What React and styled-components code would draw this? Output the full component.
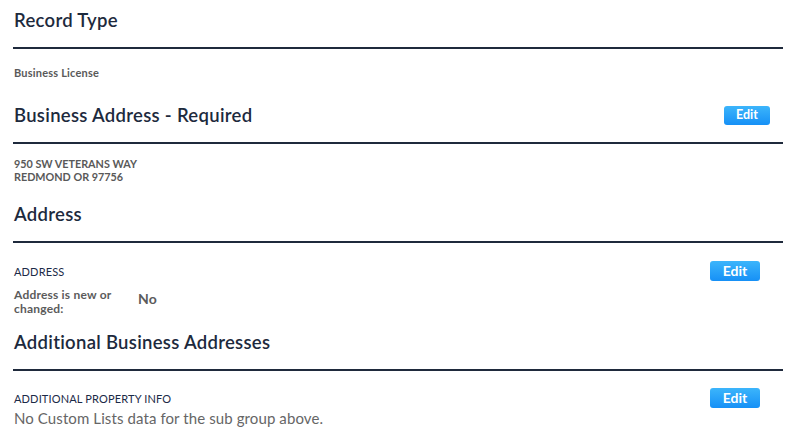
import React from "react";
import styled, { createGlobalStyle } from "styled-components";

const Global = createGlobalStyle`
  html, body { margin: 0; padding: 0; background: #ffffff; }
  body { font-family: Lato, "Open Sans", "Liberation Sans", sans-serif; }
`;

const Page = styled.div`
  width: 770px;
  margin-left: 13px;
  padding-top: 1px;
`;

const SectionHeader = styled.div`
  display: flex;
  align-items: center;
  justify-content: space-between;
  height: 38px;
  padding-bottom: 8px;
  padding-right: 13px;
  border-bottom: 2px solid #1f2a3c;
`;

const Heading = styled.h2`
  margin: 0 0 0 1px;
  font-size: 18.5px;
  font-weight: 600;
  color: #1d2a3d;
  line-height: 24px;
  letter-spacing: 0.3px;
`;

const Body = styled.div`
  padding: ${(p) => p.$pad};
  padding-left: 1px;
`;

const SmallText = styled.div`
  font-size: ${(p) => p.$size || "10px"};
  font-weight: 700;
  color: #595959;
  line-height: ${(p) => p.$lh || "14px"};
  letter-spacing: ${(p) => p.$ls || "0"};
`;

const Row = styled.div`
  display: flex;
  align-items: center;
  justify-content: space-between;
  height: 20px;
  padding-right: 23px;
`;

const GroupLabel = styled.div`
  font-size: 11px;
  color: #1b2a47;
  letter-spacing: 0.15px;
`;

const EditButton = styled.button`
  border: none;
  border-radius: 3px;
  background: linear-gradient(#3cb5fb, #1690f6);
  color: #ffffff;
  font-family: Lato, "Open Sans", sans-serif;
  font-weight: 700;
  font-size: ${(p) => (p.$small ? "12.5px" : "14px")};
  width: ${(p) => (p.$small ? "46px" : "50px")};
  height: ${(p) => (p.$small ? "19px" : "20px")};
  padding: 0;
  line-height: 1;
  cursor: pointer;
`;

const Field = styled.div`
  display: grid;
  grid-template-columns: 124px 1fr;
  margin-top: 7px;
`;

const FieldLabel = styled.div`
  max-width: 108px;
  font-size: 12px;
  font-weight: 700;
  color: #5b5b5b;
  line-height: 14px;
  letter-spacing: 0.2px;
`;

const FieldValue = styled.div`
  font-size: 14px;
  font-weight: 700;
  color: #5b5b5b;
  line-height: 14px;
  padding-top: 4px;
  letter-spacing: 0.3px;
`;

const Message = styled.div`
  font-size: 15px;
  color: #666666;
  line-height: 18px;
  margin-top: 1px;
  letter-spacing: 0.1px;
`;

export default function App() {
  return (
    <>
      <Global />
      <Page>
        <SectionHeader>
          <Heading>Record Type</Heading>
        </SectionHeader>
        <Body $pad="17px 0 16px">
          <SmallText $size="11px" $ls="0.2px">Business License</SmallText>
        </Body>

        <SectionHeader>
          <Heading>Business Address - Required</Heading>
          <EditButton $small>Edit</EditButton>
        </SectionHeader>
        <Body $pad="13px 0 12px">
          <SmallText $size="10.8px" $lh="13px">950 SW VETERANS WAY</SmallText>
          <SmallText $size="10.8px" $lh="13px">REDMOND OR 97756</SmallText>
        </Body>

        <SectionHeader>
          <Heading>Address</Heading>
        </SectionHeader>
        <Body $pad="18px 0 7px">
          <Row>
            <GroupLabel>ADDRESS</GroupLabel>
            <EditButton>Edit</EditButton>
          </Row>
          <Field>
            <FieldLabel>Address is new or changed:</FieldLabel>
            <FieldValue>No</FieldValue>
          </Field>
        </Body>

        <SectionHeader>
          <Heading>Additional Business Addresses</Heading>
        </SectionHeader>
        <Body $pad="17px 0 0">
          <Row>
            <GroupLabel>ADDITIONAL PROPERTY INFO</GroupLabel>
            <EditButton>Edit</EditButton>
          </Row>
          <Message>No Custom Lists data for the sub group above.</Message>
        </Body>
      </Page>
    </>
  );
}
